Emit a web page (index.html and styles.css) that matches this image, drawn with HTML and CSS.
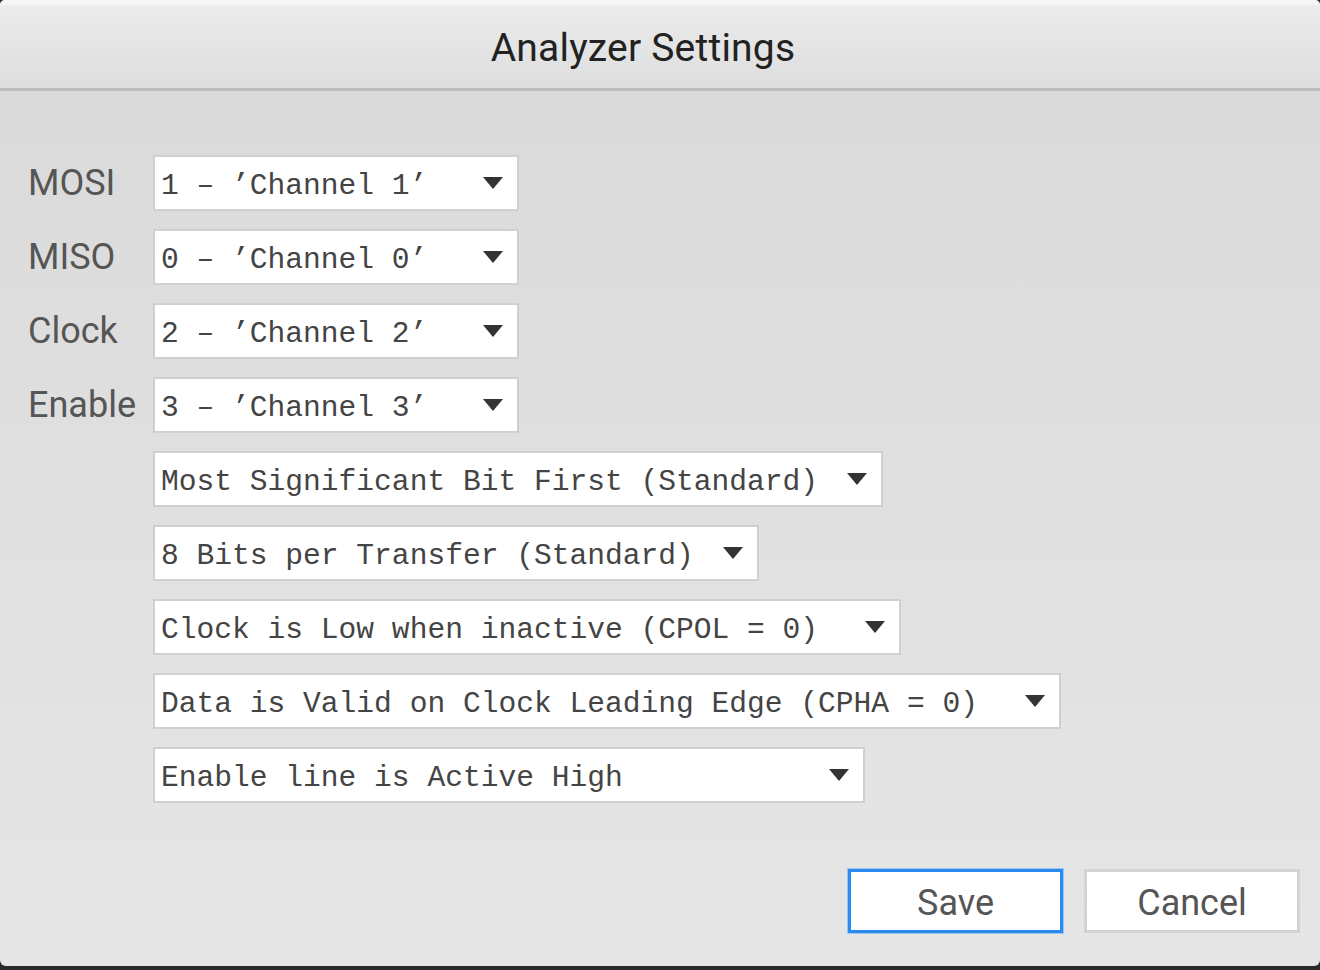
FILE: index.html
```html
<!DOCTYPE html>
<html>
<head>
<meta charset="utf-8">
<title>Analyzer Settings</title>
<link rel="stylesheet" href="styles.css">
</head>
<body>
<div class="dialog">
  <div class="titlebar"><span class="title">Analyzer Settings</span></div>
  <div class="content">
    <div class="form">
      <div class="label">MOSI</div>
      <div class="combo w-ch"><span class="val">1 – ’Channel 1’</span><svg class="arrow" viewBox="0 0 20 12"><polygon points="0,0 20,0 10,12"/></svg></div>
      <div class="label">MISO</div>
      <div class="combo w-ch"><span class="val">0 – ’Channel 0’</span><svg class="arrow" viewBox="0 0 20 12"><polygon points="0,0 20,0 10,12"/></svg></div>
      <div class="label">Clock</div>
      <div class="combo w-ch"><span class="val">2 – ’Channel 2’</span><svg class="arrow" viewBox="0 0 20 12"><polygon points="0,0 20,0 10,12"/></svg></div>
      <div class="label">Enable</div>
      <div class="combo w-ch"><span class="val">3 – ’Channel 3’</span><svg class="arrow" viewBox="0 0 20 12"><polygon points="0,0 20,0 10,12"/></svg></div>
      <div class="label"></div>
      <div class="combo w-msb"><span class="val">Most Significant Bit First (Standard)</span><svg class="arrow" viewBox="0 0 20 12"><polygon points="0,0 20,0 10,12"/></svg></div>
      <div class="label"></div>
      <div class="combo w-bits"><span class="val">8 Bits per Transfer (Standard)</span><svg class="arrow" viewBox="0 0 20 12"><polygon points="0,0 20,0 10,12"/></svg></div>
      <div class="label"></div>
      <div class="combo w-cpol"><span class="val">Clock is Low when inactive (CPOL = 0)</span><svg class="arrow" viewBox="0 0 20 12"><polygon points="0,0 20,0 10,12"/></svg></div>
      <div class="label"></div>
      <div class="combo w-cpha"><span class="val">Data is Valid on Clock Leading Edge (CPHA = 0)</span><svg class="arrow" viewBox="0 0 20 12"><polygon points="0,0 20,0 10,12"/></svg></div>
      <div class="label"></div>
      <div class="combo w-en"><span class="val">Enable line is Active High</span><svg class="arrow" viewBox="0 0 20 12"><polygon points="0,0 20,0 10,12"/></svg></div>
    </div>
    <div class="buttons">
      <button class="btn primary">Save</button>
      <button class="btn">Cancel</button>
    </div>
  </div>
</div>
</body>
</html>
```

FILE: styles.css
```css
html, body {
  margin: 0;
  padding: 0;
}
body {
  background: #2b2b2b;
  width: 1320px;
  height: 970px;
  overflow: hidden;
}
.dialog {
  height: 966px;
  display: flex;
  flex-direction: column;
  border-radius: 5px 5px 6px 6px;
  overflow: hidden;
  background: linear-gradient(#d9d9d9, #e6e6e6);
}
.titlebar {
  flex: none;
  height: 91px;
  box-sizing: border-box;
  border-bottom: 3px solid #bdbdbd;
  background: linear-gradient(#f6f6f6 0, #f6f6f6 4px, #ebebeb 6px, #dedede 100%);
  display: flex;
  justify-content: center;
  align-items: center;
  padding: 8px 34px 0 0;
}
.title {
  font-family: Roboto, "Liberation Sans", sans-serif;
  font-size: 39px;
  color: #222;
  letter-spacing: 0.2px;
}
.content {
  flex: 1;
  display: flex;
  flex-direction: column;
}
.form {
  display: grid;
  grid-template-columns: 125px max-content;
  row-gap: 18px;
  padding: 64px 0 0 28px;
  align-items: center;
}
.label {
  font-family: Roboto, "Liberation Sans", sans-serif;
  font-size: 36px;
  color: #555;
  white-space: nowrap;
}
.combo {
  box-sizing: border-box;
  height: 56px;
  background: #fff;
  border: 2px solid #d0d0d0;
  display: flex;
  align-items: center;
  justify-content: space-between;
  padding: 0 14px 0 6px;
}
.val {
  font-family: "Liberation Mono", "Courier New", monospace;
  font-size: 29.6px;
  color: #444;
  white-space: pre;
  position: relative;
  top: 3px;
}
.arrow {
  width: 20px;
  height: 12px;
  fill: #333;
  flex: none;
}
.w-ch { width: 366px; }
.w-msb { width: 730px; }
.w-bits { width: 606px; }
.w-cpol { width: 748px; }
.w-cpha { width: 908px; }
.w-en { width: 712px; }
.buttons {
  margin-top: auto;
  display: flex;
  justify-content: flex-end;
  gap: 21px;
  padding: 0 20px 33px 0;
}
.btn {
  box-sizing: border-box;
  width: 216px;
  height: 64px;
  background: #fff;
  border: 3px solid #d3d3d3;
  font-family: Roboto, "Liberation Sans", sans-serif;
  font-size: 36px;
  color: #555;
  padding: 4px 0 0;
}
.btn.primary {
  border: 3px solid #2a8af0;
  box-shadow: 0 0 0 1px #9dc6f3;
  width: 215px;
}
```
